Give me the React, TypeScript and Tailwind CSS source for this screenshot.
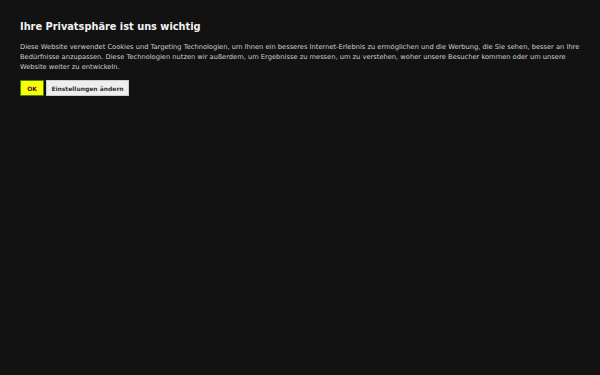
export default function App() {
  return (
    <div className="min-h-[375px] w-full bg-[#121212] px-5 pt-[19px] font-['DejaVu_Sans',sans-serif]">
      <h2 className="text-[9.8px] font-bold leading-[16px] text-[#f2f2f2]">
        Ihre Privatsphäre ist uns wichtig
      </h2>
      <p className="mt-[7px] text-[6.7px] leading-[10px] text-[#cfcfcf]">
        Diese Website verwendet Cookies und Targeting Technologien, um Ihnen ein besseres Internet-Erlebnis zu
        ermöglichen und die Werbung, die Sie sehen, besser an Ihre Bedürfnisse anzupassen. Diese Technologien
        nutzen wir außerdem, um Ergebnisse zu messen, um zu verstehen, woher unsere Besucher kommen oder um unsere
        Website weiter zu entwickeln.
      </p>
      <div className="mt-[8px] flex gap-[2px]">
        <button className="h-4 w-[24px] border border-[#3a8a1a] bg-[#ffff00] text-[6px] font-bold text-[#222]">
          OK
        </button>
        <button className="h-4 w-[83px] border border-[#ccc] bg-[#eeeeee] text-[6px] font-bold text-[#333]">
          Einstellungen ändern
        </button>
      </div>
    </div>
  )
}
